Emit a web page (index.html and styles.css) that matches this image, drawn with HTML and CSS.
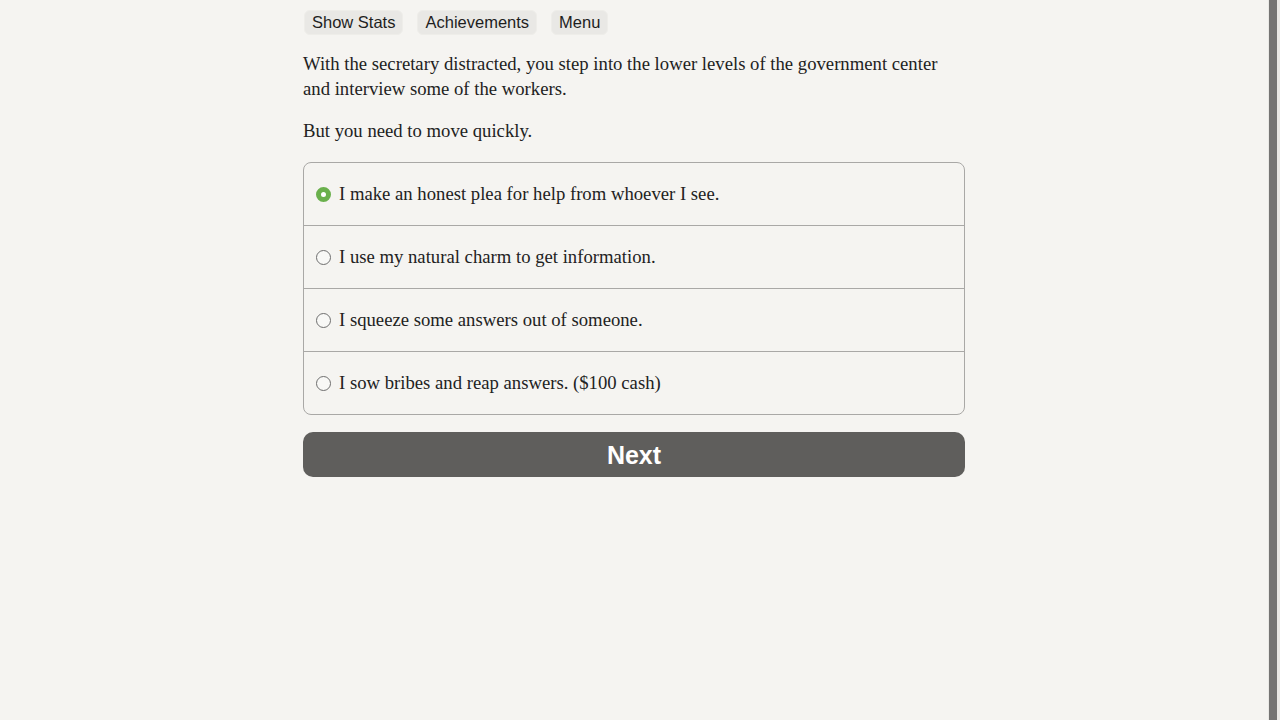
FILE: index.html
```html
<!DOCTYPE html>
<html lang="en">
<head>
<meta charset="utf-8">
<title>Choice</title>
<link rel="stylesheet" href="styles.css">
</head>
<body>
<div class="page">
  <main class="main">
    <div class="column">
      <nav class="toolbar">
        <button class="tool-btn">Show Stats</button>
        <button class="tool-btn">Achievements</button>
        <button class="tool-btn">Menu</button>
      </nav>
      <div class="story">
        <p>With the secretary distracted, you step into the lower levels of the government center and interview some of the workers.</p>
        <p>But you need to move quickly.</p>
      </div>
      <form class="choices">
        <label class="choice">
          <span class="radio radio-on"></span>
          <span class="choice-text">I make an honest plea for help from whoever I see.</span>
        </label>
        <label class="choice">
          <span class="radio"></span>
          <span class="choice-text">I use my natural charm to get information.</span>
        </label>
        <label class="choice">
          <span class="radio"></span>
          <span class="choice-text">I squeeze some answers out of someone.</span>
        </label>
        <label class="choice">
          <span class="radio"></span>
          <span class="choice-text">I sow bribes and reap answers. ($100 cash)</span>
        </label>
      </form>
      <button class="next-btn">Next</button>
    </div>
  </main>
  <div class="side-rail"><div class="rail-bar"></div></div>
</div>
</body>
</html>
```
FILE: styles.css
```css
html, body {
  margin: 0;
  padding: 0;
  background: #f5f4f1;
}
.page {
  display: flex;
  width: 1280px;
  height: 720px;
}
.main {
  flex: 1 1 auto;
  display: flex;
  justify-content: center;
}
.column {
  width: 662px;
  padding-top: 10px;
}
.toolbar {
  display: flex;
  gap: 14px;
  padding-left: 1px;
}
.tool-btn {
  font-family: "Liberation Sans", Arial, sans-serif;
  font-size: 16.5px;
  color: #1e1e1e;
  background: #e9e8e5;
  border: 1px solid #eeede9;
  border-radius: 6px;
  padding: 0 7px;
  height: 25px;
  line-height: 23px;
}
.story {
  font-family: "Liberation Serif", "Times New Roman", serif;
  font-size: 18.7px;
  line-height: 25px;
  color: #222222;
  margin-top: 16px;
}
.story p {
  margin: 0 0 17px 0;
}
.choices {
  margin-top: 19px;
  border: 1px solid #a9a8a6;
  border-radius: 8px;
  display: flex;
  flex-direction: column;
}
.choice {
  display: flex;
  align-items: center;
  height: 62px;
  padding-left: 12px;
  gap: 8px;
  border-top: 1px solid #a9a8a6;
  font-family: "Liberation Serif", "Times New Roman", serif;
  font-size: 18.7px;
  color: #222222;
}
.choice:first-child {
  border-top: none;
}
.radio {
  box-sizing: border-box;
  width: 15px;
  height: 15px;
  border: 1.5px solid #6e6e6e;
  border-radius: 50%;
  background: #f8f8f6;
  flex: none;
}
.radio-on {
  border: 5px solid #6ab04c;
  background: #ffffff;
}
.next-btn {
  display: block;
  width: 100%;
  margin-top: 17px;
  height: 45px;
  border: none;
  border-radius: 10px;
  background: #5f5e5c;
  color: #ffffff;
  font-family: "Liberation Sans", Arial, sans-serif;
  font-weight: bold;
  font-size: 25px;
  padding-top: 2px;
}
.side-rail {
  box-sizing: border-box;
  flex: 0 0 12px;
  width: 12px;
  display: flex;
  padding: 0 3px 0 1px;
  background: #e9e8e5;
}
.rail-bar {
  flex: 1 1 auto;
  background: #757473;
}
```
